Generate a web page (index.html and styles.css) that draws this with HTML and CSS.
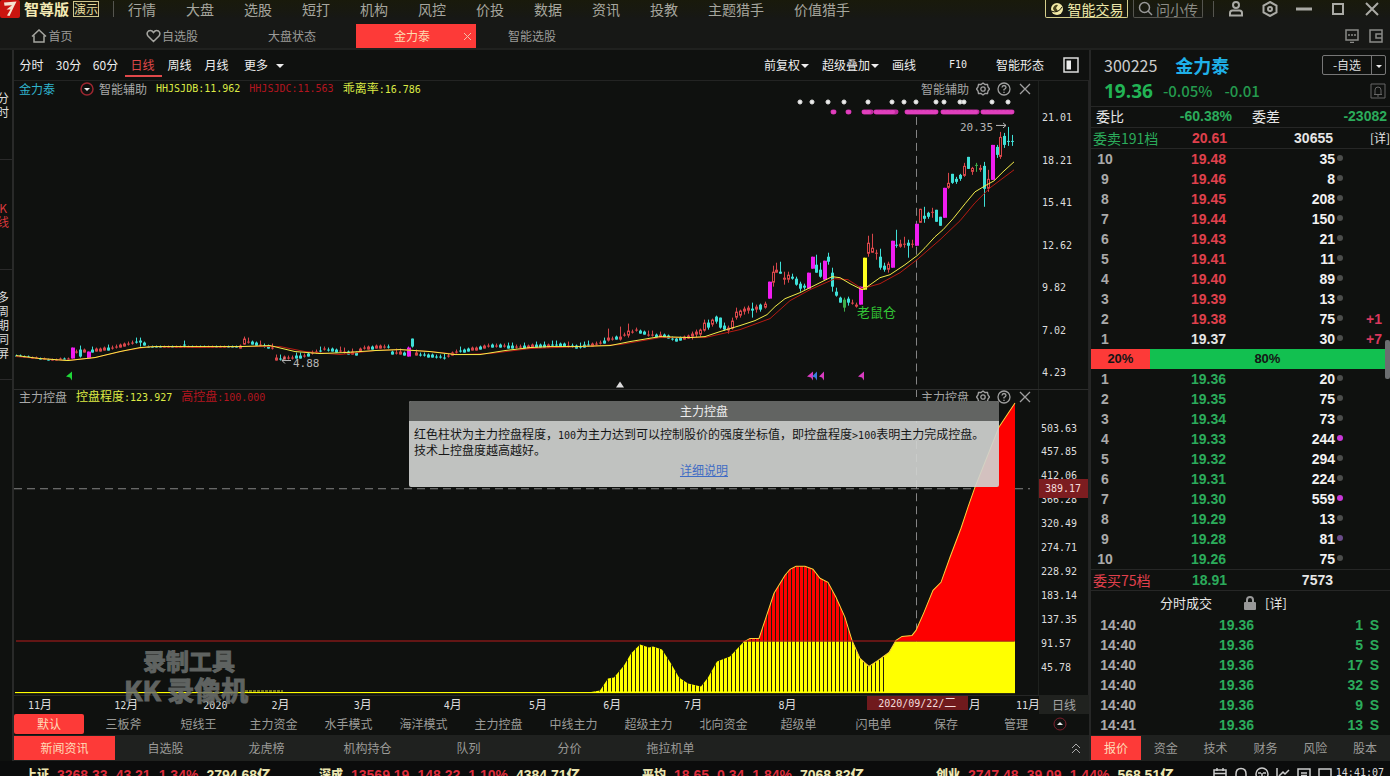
FILE: index.html
```html
<!DOCTYPE html>
<html lang="zh-CN">
<head>
<meta charset="utf-8">
<title>金力泰 300225</title>
<link rel="stylesheet" href="styles.css">
</head>
<body>
<div class="app">
  <header class="topbar">
    <svg class="logo" viewBox="0 0 20 18" aria-hidden="true"><rect width="20" height="18" rx="2" fill="#c9150f"/><path d="M4 2.500L16.500 1.500 14 6.500 9.500 16 7 15.500 10.500 9.500 6.500 9.500 12 5.200 4.500 5.800Z" fill="#f6e3d0"/></svg>
    <strong class="brand">智尊版</strong>
    <span class="badge">演示</span>
    <i class="sep"></i>
    <nav class="mainnav">
      <a href="#">行情</a><a href="#">大盘</a><a href="#">选股</a><a href="#">短打</a><a href="#">机构</a><a href="#">风控</a><a href="#">价投</a><a href="#">数据</a><a href="#">资讯</a><a href="#">投教</a><a href="#">主题猎手</a><a href="#">价值猎手</a>
    </nav>
    <button class="trade"><svg width="14" height="14" viewBox="0 0 14 14"><circle cx="7" cy="7" r="6" fill="#f3eaa5"/><path d="M3 7a4 4 0 0 1 5-4L6 6 8 9Q5 11 3 7Z" fill="#4c461c"/><path d="M1 9Q8 12 12 5" stroke="#17160d" fill="none"/></svg>智能交易</button>
    <label class="search"><svg width="15" height="15" viewBox="0 0 15 15"><circle cx="6.500" cy="6.500" r="5" /><path d="M10 10L14 14"/></svg><input type="text" placeholder="问小传" aria-label="问小传"></label>
    <i class="sep"></i>
    <div class="winbtns">
      <button aria-label="用户"><svg viewBox="0 0 16 16"><circle cx="8" cy="4" r="3"/><path d="M2 14.500V12Q2 9.500 4.500 9.500H11.500Q14 9.500 14 12V14.500Z"/></svg></button>
      <button aria-label="设置"><svg viewBox="0 0 16 16"><path d="M8 1L14.500 4.500V11.500L8 15 1.500 11.500V4.500Z"/><circle cx="8" cy="8" r="2"/></svg></button>
      <button aria-label="最小化"><svg viewBox="0 0 16 16"><path d="M0 8H16" stroke-width="3"/></svg></button>
      <button aria-label="最大化"><svg viewBox="0 0 16 16"><path d="M3 3H13V13H3Z"/></svg></button>
      <button aria-label="关闭"><svg viewBox="0 0 16 16"><path d="M2 2L14 14M14 2L2 14"/></svg></button>
    </div>
  </header>

  <div class="tabbar">
    <a class="tab home" href="#"><svg width="16" height="14" viewBox="0 0 16 14"><path d="M1 7.500L8 1 15 7.500M3 6.500V13H13V6.500"/></svg>首页</a>
    <a class="tab" href="#"><svg width="15" height="14" viewBox="0 0 15 14"><path d="M7.500 12.500L2 7Q0 4 2.500 2 5.500 .500 7.500 3.500 9.500 .500 12.500 2 15 4 13 7Z"/></svg>自选股</a>
    <a class="tab" href="#">大盘状态</a>
    <div class="tab active">金力泰<button class="tabclose" aria-label="关闭标签"><svg width="9" height="9" viewBox="0 0 9 9"><path d="M1 1L8 8M8 1L1 8"/></svg></button></div>
    <a class="tab" href="#">智能选股</a>
    <div class="tabtools">
      <button aria-label="屏幕"><svg width="14" height="14" viewBox="0 0 14 14"><path d="M1 1H13V11H1ZM5 13.500H9M4 5V7M10 5V7M6 6H8"/></svg></button>
      <button aria-label="布局"><svg width="14" height="14" viewBox="0 0 14 14"><path d="M1 1H13V13H1ZM13 5H7V9H13"/></svg></button>
    </div>
  </div>

  <main class="main">
    <nav class="rail">
      <a href="#">分<br>时</a>
      <a href="#" class="on">K<br>线</a>
      <a href="#">多<br>周<br>期<br>同<br>屏</a>
    </nav>

    <section class="charts">
      <div class="periods">
        <a href="#">分时</a><a href="#">30分</a><a href="#">60分</a><a href="#" class="on">日线</a><a href="#">周线</a><a href="#">月线</a>
        <button class="more">更多<i class="caret gapped"></i></button>
        <div class="charttools">
          <button>前复权<i class="caret"></i></button>
          <button>超级叠加<i class="caret"></i></button>
          <button class="draw">画线</button>
          <button class="mono f10">F10</button>
          <button class="shape">智能形态</button>
          <button aria-label="侧栏"><svg width="16" height="16" viewBox="0 0 16 16"><path d="M1 1H15V15H1Z" fill="none" stroke="#ddd" stroke-width="1.500"/><path d="M3.500 3.500H8V12.500H3.500Z" fill="#eee"/></svg></button>
        </div>
      </div>

      <div class="panel price">
        <div class="stack">
          <svg class="plot" id="kline" viewBox="14 81 1024 308" preserveAspectRatio="none">
            <g class="cross"><path d="M916.500 117V389"/></g>
            <g id="candles"></g>
            <polyline class="ma slow" points="16,357 40,359 68,361 95,358 125,351 150,347 200,348 240,347 280,347 305,352 340,355 375,351 400,350 430,352 460,355 490,354 530,349 580,347 620,345 660,338 705,338 740,330 770,319 790,301 810,290 835,279 848,280 862,289 880,284 900,273 917,260 940,240 960,221 975,203 990,188 1014,170"/>
            <polyline class="ma fast" points="16,356 40,359 68,361 95,358 120,352 140,348 155,347 200,347 240,347 270,346 295,352 320,354 345,353 375,351 400,350 430,352 455,355 480,355 505,351 530,348 550,347 575,347 610,346 630,342 660,337 690,338 705,337 720,332 740,326 755,321 767,315 775,307 785,299 800,293 810,288 832,277 840,278 850,284 862,290 866,288 880,278 890,275 905,265 917,256 925,248 935,237 943,230 953,219 965,204 975,192 985,186 994,181 1003,172 1014,162"/>
            <g id="stars"></g>
            <g class="beads"><path d="M833 112h1M848 112h1M864 112H871M876 112H896M907 112H936M943 112H977M983 112H1012"/><path class="lit" d="M833 112h1M848 112h1M864 112H871M876 112H896M907 112H936M943 112H977M983 112H1012"/></g>
            <path d="M66 377L72 372V381L70 378Z" fill="#1fd838"/>
            <g fill="#d83cc0"><path d="M807 377L813 372V381L811 378Z"/><path d="M819 377L824 372V381L822 378Z"/><path d="M858 377L864 372V381L862 378Z"/></g>
            <path d="M812 377L817 372V381L815 378Z" fill="#3b7de0"/>
            <path d="M616 388L620 382 624 388Z" fill="#ddd"/>
            <g class="arrow"><path d="M291 361H282M285 358L282 361 285 364M996 125.500H1006M1003 123L1006 125.500 1003 128"/></g>
            <text class="note" x="293" y="367">4.88</text>
            <text class="note" x="960" y="131">20.35</text>
            <text class="rat" x="857" y="317">老鼠仓</text>
          </svg>
          <div class="phead">
            <span class="stock">金力泰</span>
            <svg width="14" height="14" viewBox="0 0 14 14"><circle cx="7" cy="7" r="6" fill="none" stroke="#9c2630" stroke-width="1.500"/><path d="M4 6H10L7 9Z" fill="#eee"/></svg>
            <span class="gray">智能辅助</span>
            <span class="yel mono">HHJSJDB:11.962</span>
            <span class="red mono">HHJSJDC:11.563</span>
            <span class="yel">乖离率<span class="mono">:16.786</span></span>
            <div class="ptools"><span>智能辅助</span>
              <button aria-label="设置"><svg viewBox="0 0 14 14"><path d="M7 1L9 2.500 11.500 2.500 12 5 13.500 7 12 9 11.500 11.500 9 11.500 7 13 5 11.500 2.500 11.500 2 9 .500 7 2 5 2.500 2.500 5 2.500Z"/><circle cx="7" cy="7" r="2.200"/></svg></button>
              <button aria-label="帮助"><svg viewBox="0 0 14 14"><circle cx="7" cy="7" r="6"/><path d="M5 5.500Q5.200 3.500 7 3.500 9 3.600 9 5.300 8.800 6.500 7 7.500V8.500M7 9.700V11"/></svg></button>
              <button aria-label="关闭"><svg viewBox="0 0 14 14"><path d="M2 2L12 12M12 2L2 12"/></svg></button>
            </div>
          </div>
        </div>
        <div class="axis"><span>21.01</span><span>18.21</span><span>15.41</span><span>12.62</span><span>9.82</span><span>7.02</span><span>4.23</span></div>
      </div>

      <div class="panel control">
        <div class="stack">
          <svg class="plot" viewBox="14 390 1024 305" preserveAspectRatio="none">
            <defs>
              <clipPath id="area"><path d="M15 693V691.500H591L600 690 608 678 614 677 624 665 631 653 640 644 649 647 653 646 662 649 671 663 679 677 688 683 701 686 708 677 717 661 730 656 743 642 750 638 759 638 765 620 774 593 785 575 790 569 796 566 805 566 813 569 820 578 828 582 836 597 845 617 852 640 860 658 869 666 878 660 889 652 896 640 902 636 912 635 916 630 924 612 933 590 941 582 950 557 961 528 968 507 975 487 999 427 1015 403V693Z"/></clipPath>
              <pattern id="slits" width="4" height="4" patternUnits="userSpaceOnUse"><rect x="3" width="1" height="4" fill="#241f08"/></pattern>
            </defs>
            <g class="cross"><path d="M916.500 389V692M14 488.500H1030"/></g>
            <g clip-path="url(#area)">
              <rect x="14" y="389" width="1002" height="252" fill="#fe0000"/>
              <rect x="14" y="641" width="1002" height="52" fill="#ffff00"/>
              <rect x="592" y="389" width="292" height="302" fill="url(#slits)"/>
            </g>
            <polyline class="edge" points="743,642 750,638 759,638 765,620 774,593 785,575 790,569 796,566 805,566 813,569 820,578 828,582 836,597 845,617 852,640 860,658 869,666 878,660 889,652 896,640 902,636 912,635 916,630 924,612 933,590 941,582 950,557 961,528 968,507 975,487 999,427 1015,403"/>
            <path d="M16 640.500H1014" stroke="#b81c1c"/>
            <path d="M245 690.500H283" stroke="#d9d930" stroke-dasharray="3 1"/>
          </svg>
          <div class="phead">
            <span class="gray">主力控盘</span>
            <span class="yel">控盘程度<span class="mono">:123.927</span></span>
            <span class="red">高控盘<span class="mono">:100.000</span></span>
            <div class="ptools"><span>主力控盘</span>
              <button aria-label="设置"><svg viewBox="0 0 14 14"><path d="M7 1L9 2.500 11.500 2.500 12 5 13.500 7 12 9 11.500 11.500 9 11.500 7 13 5 11.500 2.500 11.500 2 9 .500 7 2 5 2.500 2.500 5 2.500Z"/><circle cx="7" cy="7" r="2.200"/></svg></button>
              <button aria-label="帮助"><svg viewBox="0 0 14 14"><circle cx="7" cy="7" r="6"/><path d="M5 5.500Q5.200 3.500 7 3.500 9 3.600 9 5.300 8.800 6.500 7 7.500V8.500M7 9.700V11"/></svg></button>
              <button aria-label="关闭"><svg viewBox="0 0 14 14"><path d="M2 2L12 12M12 2L2 12"/></svg></button>
            </div>
          </div>
          <div class="popup" role="dialog" aria-label="主力控盘">
            <h2>主力控盘</h2>
            <p>红色柱状为主力控盘程度，<span class="mono">100</span>为主力达到可以控制股价的强度坐标值，即控盘程度<span class="mono">&gt;100</span>表明主力完成控盘。<br>技术上控盘度越高越好。</p>
            <a href="#">详细说明</a>
          </div>
          <div class="watermark"><span class="w1">录制工具</span><span class="w2">KK 录像机</span></div>
        </div>
        <div class="axis dense"><span>503.63</span><span>457.85</span><span>412.06</span><span>366.28</span><span>320.49</span><span>274.71</span><span>228.92</span><span>183.14</span><span>137.35</span><span>91.57</span><span>45.78</span><b class="tag">389.17</b></div>
      </div>

      <div class="dates">
        <div class="months">
          <span><i>11</i>月</span><span><i>12</i>月</span><span><i>2020</i></span><span><i>2</i>月</span><span><i>3</i>月</span><span><i>4</i>月</span><span><i>5</i>月</span><span><i>6</i>月</span><span><i>7</i>月</span><span><i>8</i>月</span><span class="tagged"><b class="datetag">2020/09/22/<em>二</em></b></span><span>月</span><span><i>11</i>月</span>
        </div>
        <button class="unit">日线</button>
      </div>

      <div class="modes">
        <button class="on">默认</button><button>三板斧</button><button>短线王</button><button>主力资金</button><button>水手模式</button><button>海洋模式</button><button>主力控盘</button><button>中线主力</button><button>超级主力</button><button>北向资金</button><button>超级单</button><button>闪电单</button><button class="n">保存</button><button class="n">管理</button>
        <button class="expand" aria-label="展开"><svg width="14" height="14" viewBox="0 0 14 14"><circle cx="7" cy="7" r="6" fill="none" stroke="#7d1f2c"/><path d="M4 8H10L7 5Z" fill="#eee"/></svg></button>
      </div>
      <div class="news">
        <button class="on">新闻资讯</button><button>自选股</button><button>龙虎榜</button><button>机构持仓</button><button>队列</button><button>分价</button><button>拖拉机单</button>
        <button class="fold" aria-label="收起"><svg width="10" height="12" viewBox="0 0 10 12"><path d="M1 6L5 2 9 6M1 11L5 7 9 11" fill="none" stroke="#aaa"/></svg></button>
      </div>
    </section>

    <aside class="quote">
      <div class="qhead">
        <div class="qline"><span class="code">300225</span><strong class="name">金力泰</strong>
          <span class="fav"><button>-自选</button><button aria-label="更多自选"><i class="caret tiny"></i></button></span></div>
        <div class="qline"><strong class="last">19.36</strong><span class="chg">-0.05%</span><span class="chg">-0.01</span>
          <button class="bell" aria-label="提醒"><svg width="16" height="16" viewBox="0 0 16 16"><path d="M1 1H15V15H1ZM4 11.500H12M5 11V7Q5 4 8 4 11 4 11 7V11M7 13H9"/></svg></button></div>
      </div>
      <div class="ratio"><span>委比</span><b class="dn">-60.38%</b><span>委差</span><b class="dn">-23082</b></div>
      <table class="book sum"><tr><th class="dn">委卖191档</th><td class="up">20.61</td><td>30655</td><td><a href="#">[详]</a></td></tr></table>
      <table class="book asks"><tbody id="asks"></tbody></table>
      <div class="force"><b class="sell">20%</b><b class="buy">80%</b></div>
      <table class="book bids"><tbody id="bids"></tbody></table>
      <table class="book sum last-sum"><tr><th class="up">委买75档</th><td class="dn">18.91</td><td>7573</td><td></td></tr></table>
      <div class="tickhead"><span>分时成交</span><svg width="12" height="14" viewBox="0 0 12 14"><path d="M3 6V4Q3 1 6 1 9 1 9 4V6" fill="none" stroke="#999" stroke-width="2"/><rect y="6" width="12" height="8" rx="1" fill="#999"/></svg><a href="#">[详]</a></div>
      <table class="trades"><tbody id="trades"></tbody></table>
      <nav class="qtabs"><button class="on">报价</button><button>资金</button><button>技术</button><button>财务</button><button>风险</button><button>股本</button></nav>
      <i class="thumb"></i>
    </aside>
  </main>

  <footer class="ticker">
    <div class="idx"><b>上证</b><em>3268.33</em><em>43.21</em><em>1.34%</em><b>2794.68亿</b></div>
    <div class="idx wide"><b>深成</b><em>13569.19</em><em>148.22</em><em>1.10%</em><b>4384.71亿</b></div>
    <div class="idx"><b>平均</b><em>18.65</em><em>0.34</em><em>1.84%</em><b>7068.82亿</b></div>
    <div class="idx tail"><b>创业</b><em>2747.48</em><em>39.09</em><em>1.44%</em><b>568.51亿</b></div>
    <div class="status">
      <svg viewBox="0 0 14 14"><path d="M1 3H13V13H1ZM1 6.500H13M4 1V4M10 1V4"/></svg>
      <svg viewBox="0 0 14 14"><path d="M2 11V7Q2 1.500 7 1.500 12 1.500 12 7V11ZM5 13H9"/></svg>
      <svg viewBox="0 0 14 14"><circle cx="7" cy="7" r="6"/><path d="M3 6H6M8 6H11M7 6V10M4 9Q7 12 10 9"/></svg>
      <svg viewBox="0 0 14 14"><path d="M1 1V13H13M3 9L7 5 9 7 13 3"/></svg>
      <svg viewBox="0 0 14 14"><path d="M1 2H13V12H1ZM4 6H10M4 8.500H10"/></svg>
      <svg viewBox="0 0 14 14"><path d="M1 2H13V12H1Z"/></svg>
      <time class="mono">14:41:07</time>
    </div>
  </footer>
</div>
<script src="app.js"></script>
</body>
</html>
```

FILE: styles.css
```css
* { box-sizing: border-box; }
body { margin: 0; background: #0f110f; color: #e6e6e6; font: 12px/14px "Noto Sans CJK SC", sans-serif; }
button { background: none; border: 0; padding: 0; margin: 0; color: inherit; font: inherit; white-space: nowrap; }
a { color: inherit; text-decoration: none; white-space: nowrap; }
i, em { font-style: normal; }
svg { display: block; flex: none; }
.mono, .axis, .note, .months i { font-family: "DejaVu Sans Mono", monospace; font-size: 10px; }
.app { display: flex; flex-direction: column; height: 100vh; overflow: hidden; }

/* title bar */
.topbar { display: flex; align-items: center; height: 18px; flex: none; background: linear-gradient(#191a0b, #171815); color: #a6a69e; font-size: 14px; line-height: 16px; }
.logo { width: 20px; height: 18px; }
.brand { margin-left: 4px; font-size: 15px; color: #f3e9b4; }
.badge { margin-left: 4px; width: 26px; height: 16px; border: 1px solid #cfc68c; color: #e3d99c; font-size: 12px; line-height: 14px; text-align: center; }
.sep { width: 1px; height: 16px; background: #55554f; margin: 0 14px; }
.mainnav { display: flex; gap: 30px; flex: 1; }
.trade, .search { display: flex; align-items: center; height: 18px; border: 1px solid #d6cf8b; border-top: 0; border-radius: 0 0 2px 2px; }
.trade { width: 83px; justify-content: center; gap: 4px; color: #efe9a9; }
.search { width: 70px; margin-left: 5px; padding-left: 4px; gap: 3px; border-color: #55554f; margin-right: -4px; }
.search svg { fill: none; stroke: #999; stroke-width: 1.500; }
.search input { width: 44px; height: 16px; padding: 0; border: 0; background: none; font: inherit; outline: 0; }
.search input::placeholder { color: #8b8b85; opacity: 1; }
.winbtns { display: flex; gap: 18px; padding-right: 10px; }
.winbtns svg { width: 16px; height: 16px; fill: none; stroke: #aaaaa5; stroke-width: 2; }

/* page tabs */
.tabbar { display: flex; height: 32px; padding-top: 6px; flex: none; background: #171816; border-bottom: 2px solid #20211f; color: #9b9b98; }
.tab { position: relative; display: flex; align-items: center; justify-content: center; gap: 1px; width: 120px; height: 24px; padding-right: 8px; }
.tab.home { width: 116px; padding-right: 12px; }
.tab svg { fill: none; stroke: #a5a5a0; stroke-width: 1.500; }
.tab.active { background: #fd3a38; color: #ffd9b0; }
.tabclose { position: absolute; right: 4px; top: 8px; }
.tab .tabclose svg { stroke: #f0c0a8; stroke-width: 1; }
.tabtools { display: flex; gap: 10px; margin-left: auto; padding-right: 7px; }
.tabtools svg { fill: none; stroke: #8a8a88; stroke-width: 1.500; }

.main { display: grid; grid-template-columns: 14px minmax(0, 1fr) 301px; flex: 1; min-height: 0; }
.rail { border-right: 2px solid #292a29; overflow: hidden; color: #ddd; }
.rail a { display: flex; align-items: center; height: 110px; margin-left: -3px; border-bottom: 1px solid #2a2a2a; text-align: center; }
.rail .on { color: #d8383c; }

/* chart column */
.charts { display: flex; flex-direction: column; min-width: 0; min-height: 0; }
.periods { display: flex; align-items: center; height: 31px; flex: none; border-bottom: 1px solid #232423; color: #eee; }
.periods > a { width: 37px; height: 24px; padding-right: 2px; text-align: center; line-height: 24px; }
.periods .on { color: #e0484a; border-bottom: 2px solid #e0484a; }
.more { margin-left: 8px; }
.caret { display: inline-block; border: 4px solid transparent; border-top-color: #eee; border-bottom: 0; margin: 0 0 2px 1px; }
.caret.gapped { margin-left: 8px; }
.caret.tiny { border-width: 3px; border-bottom: 0; margin: 0 0 2px; }
.charttools { display: flex; align-items: center; gap: 13px; margin-left: auto; padding-right: 10px; }
.charttools .f10 { margin-left: 20px; }
.charttools .shape { margin: 0 6px 0 16px; }
.panel { display: grid; grid-template-columns: minmax(0, 1fr) 49px; min-height: 0; border-right: 1px solid #242424; }
.price { flex: 308 1 0; }
.control { flex: 306 1 0; border-top: 1px solid #2c2d2c; }
.stack { position: relative; display: grid; grid-template: minmax(0, 1fr) / minmax(0, 1fr); border-right: 1px solid #1e211e; min-height: 0; }
.plot { grid-area: 1 / 1; width: 100%; height: 100%; min-height: 0; }
.phead { grid-area: 1 / 1; align-self: start; display: flex; align-items: center; gap: 9px; height: 16px; padding: 0 6px 0 5px; white-space: nowrap; }
.control .phead { height: 14px; }
.price .phead svg { margin-right: -4px; }
.stock { color: #2fb3cc; margin-right: 16px; }
.gray { color: #a9a9a9; }
.yel { color: #dcea45; }
.red { color: #b3151f; }
.ptools { display: flex; align-items: center; gap: 7px; margin-left: auto; color: #a5a5a5; }
.phead .ptools svg { width: 14px; height: 14px; margin: 0; fill: none; stroke: #a0a0a0; stroke-width: 1.300; }
.axis { display: flex; flex-direction: column; justify-content: space-between; padding: 30px 0 8px 3px; color: #ddd; }
.axis span { display: block; }
.dense { position: relative; padding: 32px 0 20px 2px; }
.tag { position: absolute; left: 0; right: 0; top: 89px; height: 19px; background: #7c1d20; color: #f5dcdc; font-weight: 400; line-height: 19px; padding-left: 6px; }
.cross path { stroke: #858585; stroke-dasharray: 8 5; fill: none; }
.ma { fill: none; stroke-width: 1; }
.fast { stroke: #f5ee4a; }
.slow { stroke: #b81a12; }
.edge { fill: none; stroke: #ffd23a; stroke-width: 1; }
.beads path { fill: none; stroke: #c02aa0; stroke-width: 5; stroke-linecap: round; }
.beads .lit { stroke: #e040bd; stroke-width: 4; stroke-dasharray: 1 3; }
.arrow { fill: none; stroke: #bbb; }
.note { fill: #b5b5b5; font-size: 11px; }
.rat { fill: #33c636; font-size: 13px; }

.popup { position: absolute; left: 395px; right: 39px; top: 11px; background: rgba(207, 209, 207, .92); color: #151515; text-align: center; padding-bottom: 10px; border-radius: 2px; overflow: hidden; }
.popup h2 { margin: 0; height: 20px; background: #626462; color: #eee; font: inherit; line-height: 20px; }
.popup p { margin: 5px; line-height: 16px; text-align: left; }
.popup .mono { line-height: 10px; }
.popup a { color: #3f6cc4; text-decoration: underline; }
.watermark { position: absolute; left: 110px; bottom: -10px; display: flex; flex-direction: column; color: #6e7270; -webkit-text-stroke: 1px #6e7270; opacity: .85; font-weight: 700; white-space: nowrap; pointer-events: none; }
.w1 { font-size: 23px; line-height: 30px; padding-left: 19px; }
.w2 { font-size: 27px; line-height: 30px; }

.dates { display: grid; grid-template-columns: minmax(0, 1fr) 50px; height: 18px; flex: none; line-height: 16px; color: #ddd; }
.months { display: grid; grid-template-columns: 86fr 89fr 68fr 82fr 90fr 85fr 74fr 81fr 94fr 88fr 102fr 47fr 23fr; padding-left: 14px; white-space: nowrap; border-top: 1px solid #262726; }
.months span { min-width: 0; }
.tagged { display: flex; }
.datetag { flex: 1; margin-right: 1px; height: 14px; background: #701a1d; color: #f5dcdc; font: 10px/14px "DejaVu Sans Mono", "Noto Sans CJK SC", monospace; text-align: center; }
.datetag em { font-size: 12px; }
.unit { background: #20221f; color: #a5a5a5; }

.modes, .news { display: flex; align-items: center; flex: none; color: #9b9b98; }
.modes { height: 22px; }
.modes button { width: 75px; height: 20px; }
.modes .on { width: 70px; margin-right: 2px; border-radius: 2px; }
.modes .n { width: 70px; }
.modes .expand { width: 14px; margin-left: 2px; }
.news { height: 26px; background: #1f211f; }
.news button { width: 101px; height: 24px; }
.news .fold { width: 10px; margin: 0 8px 0 auto; }
.modes .on, .news .on, .qtabs .on { background: #fd3a38; color: #ffdcb8; }
.expand svg { margin: 3px 0; }
.fold svg { margin: 6px 0; }

/* quote column */
.quote { position: relative; display: flex; flex-direction: column; border-left: 2px solid #262726; min-width: 0; overflow: hidden; }
.dn { color: #2bab5b; }
.up { color: #e0404c; }
.qhead { padding: 2px 4px 0 13px; height: 57px; border-bottom: 1px solid #262726; flex: none; }
.qline { display: flex; align-items: center; height: 26px; }
.code { font-size: 16px; color: #ccc; }
.name { margin-left: 18px; font-size: 18px; color: #1fb0e8; }
.fav { display: flex; margin-left: auto; border: 1px solid #777; border-radius: 2px; height: 20px; }
.fav button { width: 48px; font-size: 12px; color: #ddd; }
.fav button + button { width: 14px; border-left: 1px solid #777; }
.last { font: 700 19px/24px "Open Sans", sans-serif; color: #22b455; margin-right: 10px; }
.chg { font-size: 15px; font-weight: 500; color: #249a4e; margin-right: 12px; }
.bell { margin-left: auto; }
.bell svg { fill: none; stroke: #666; }
.ratio { display: grid; grid-template-columns: 50px 86px 53px 1fr; align-items: center; height: 21px; flex: none; padding: 0 3px 2px 5px; border-bottom: 1px solid #262726; font-size: 14px; }
.ratio b { text-align: right; font: 700 14px/18px "Liberation Sans", sans-serif; }
.ratio span + b + span { padding-left: 20px; white-space: nowrap; }
table { border-collapse: collapse; width: 100%; table-layout: fixed; flex: none; }
.book td, .book th, .trades td { height: 20px; padding: 0; text-align: right; font: 700 14px/20px "Liberation Sans", sans-serif; white-space: nowrap; }
.book th { text-align: left; font: 400 14px/20px "Noto Sans CJK SC", sans-serif; padding-left: 2px; }
.sum { border-bottom: 1px solid #262726; }
.sum th { width: 76px; }
.sum td:nth-child(2) { width: 60px; }
.sum td:nth-child(3) { width: 106px; }
.sum td:nth-child(4) { font: 400 12px/20px "Noto Sans CJK SC", sans-serif; }
.last-sum { border-top: 1px solid #262726; }
.book .rank { width: 28px; text-align: center; color: #aaa; }
.book .px { width: 107px; }
.book .vol { width: 109px; color: #f2f2f2; }
.book .dot { width: 10px; }
.dot i { display: block; width: 6px; height: 6px; margin: 6px 0 8px 2px; border-radius: 3px; background: #4c4e4c; }
.dot i.hot { background: #c838d8; }
.dot i.warm { background: #6a4c8a; }
.book .diff { padding-right: 8px; color: #d8385c; }
.force { display: flex; height: 20px; flex: none; color: #151515; text-align: center; font: 700 13px/20px "Liberation Sans", sans-serif; }
.sell { flex: 1; background: #fd3a38; }
.buy { flex: 4; background: #12c050; padding-right: 5px; }
.tickhead { display: flex; align-items: center; height: 24px; flex: none; padding-left: 69px; font-size: 13px; }
.tickhead svg { margin: 0 9px 0 32px; }
.trades td:nth-child(1) { width: 45px; color: #aaa; }
.trades td:nth-child(2) { width: 118px; }
.trades td:nth-child(3) { width: 109px; }
.trades td:nth-child(4) { padding-right: 11px; }
.qtabs { display: flex; margin-top: auto; height: 26px; background: #1f211f; color: #9b9b98; flex: none; }
.qtabs button { flex: 1; height: 24px; margin-top: 1px; }
.thumb { position: absolute; right: 0; top: 290px; width: 5px; height: 39px; border-radius: 2px; background: #6b6e70; }

/* index ticker */
.ticker { display: flex; height: 15px; flex: none; overflow: hidden; padding-left: 25px; background: #0b0c0c; }
.idx { display: flex; flex: none; gap: 8px; width: 294px; font: 700 14px/28px "Liberation Sans", "Noto Sans CJK SC", sans-serif; white-space: nowrap; }
.idx.wide { width: 323px; }
.idx.tail { width: 260px; }
.idx b { color: #ece6b0; }
.idx b:first-child { font-size: 12px; }
.idx em { color: #dc2c3c; }
.status { display: flex; flex: none; gap: 7px; margin-left: auto; padding-right: 6px; }
.status svg { width: 14px; height: 14px; margin-top: 6px; fill: none; stroke: #ccc; stroke-width: 1.500; }
.status time { line-height: 24px; color: #ddd; margin-left: -3px; }
```

FILE: app.js
```js
// Order book and trade rows
const asks = [[10, "19.48", 35], [9, "19.46", 8], [8, "19.45", 208], [7, "19.44", 150], [6, "19.43", 21],
  [5, "19.41", 11], [4, "19.40", 89], [3, "19.39", 13], [2, "19.38", 75, "+1"], [1, "19.37", 30, "+7"]];
const bids = [[1, "19.36", 20], [2, "19.35", 75], [3, "19.34", 73], [4, "19.33", 244], [5, "19.32", 294],
  [6, "19.31", 224], [7, "19.30", 559], [8, "19.29", 13], [9, "19.28", 81], [10, "19.26", 75]];
const hot = { 244: "hot", 559: "hot", 81: "warm" };
const row = cls => ([n, p, v, d]) =>
  `<tr><td class="rank">${n}</td><td class="px ${p === "19.37" ? "" : cls}">${p}</td><td class="vol">${v}</td>` +
  `<td class="dot"><i class="${hot[v] || ""}"></i></td><td class="diff">${d || ""}</td></tr>`;
document.getElementById("asks").innerHTML = asks.map(row("up")).join("");
document.getElementById("bids").innerHTML = bids.map(row("dn")).join("");
document.getElementById("trades").innerHTML =
  [["14:40", 1], ["14:40", 5], ["14:40", 17], ["14:40", 32], ["14:40", 9], ["14:41", 13]]
    .map(([t, v]) => `<tr><td>${t}</td><td class="dn">19.36</td><td class="dn">${v}</td><td class="dn">S</td></tr>`).join("");

// Candles: [x, high, low, body top, body bottom, kind]
const CY = "#3fe0d8", RD = "#d8464a", MG = "#f01df0";
const out = [];
function candle(x, hi, lo, t, b, k) {
  const col = { c: CY, r: RD, m: MG, y: "#ffff20", g: "#3fae4a" }[k];
  out.push(`<path d="M${x + .5} ${hi}V${lo}" stroke="${col}"/>`);
  const h = Math.max(1, b - t);
  if (k === "r" && h > 2) out.push(`<rect x="${x - 1 + .5}" y="${t + .5}" width="2" height="${h - 1}" fill="#0f110f" stroke="${col}"/>`);
  else {
    const w = k === "m" || k === "y" ? 4 : 3;
    out.push(`<rect x="${x - 1}" y="${t}" width="${w}" height="${h}" fill="${col}"/>`);
  }
}
// quiet early stretch follows a coarse level line
const level = [[16, 356], [50, 360], [68, 359], [76, 352], [100, 350], [112, 348], [140, 341], [148, 347], [240, 347],
  [244, 341], [272, 348], [276, 359], [300, 357], [316, 352], [324, 349], [340, 351], [356, 354], [362, 348], [388, 347],
  [392, 353], [416, 354], [444, 358], [456, 352], [485, 347], [490, 346], [520, 347], [560, 345], [580, 347], [600, 343],
  [608, 340], [628, 334], [636, 330], [648, 335], [664, 336], [676, 340], [684, 338], [700, 333], [706, 327], [716, 320],
  [722, 325], [728, 330], [736, 316], [744, 311], [760, 308]];
const at = x => {
  const i = level.findIndex(p => p[0] >= x);
  if (i <= 0) return level[0][1];
  const [x0, y0] = level[i - 1], [x1, y1] = level[i];
  return y0 + (y1 - y0) * (x - x0) / (x1 - x0);
};
const special = { 72: [348, 359, 348, 359, "m"], 80: [346, 358, 350, 357, "c"], 88: [352, 359, 352, 359, "m"],
  140: [338, 347, 341, 343, "c"], 184: [341, 348, 345, 346, "c"], 244: [337, 345, 339, 345, "r"],
  408: [347, 357, 348, 357, "m"], 412: [339, 348, 339, 347, "c"], 608: [329, 342, 338, 341, "r"],
  620: [327, 341, 337, 340, "r"], 628: [324, 338, 331, 336, "r"], 704: [320, 332, 323, 331, "r"],
  720: [318, 329, 318, 328, "c"], 724: [323, 331, 326, 330, "c"], 732: [318, 330, 321, 329, "r"],
  736: [308, 320, 312, 318, "r"], 752: [303, 318, 309, 311, "c"] };
for (let x = 16, i = 0; x <= 760; x += 4, i++) {
  if (special[x]) { candle(x, ...special[x]); continue; }
  const n = (i * 37 + (i * i) % 11) % 7, y = Math.round(at(x));
  const falling = at(x + 4) > at(x - 4) + .3;
  const k = falling ? (n < 5 ? "c" : "r") : (n < 4 ? "r" : "c");
  const flat = x < 70 || (x > 144 && x < 240), grow = x > 690 ? 2 : 0;
  const body = flat ? 0 : n % 3;
  candle(x, y - (flat ? 1 : 2) - (n > 4 && !flat ? 2 : 0) - grow, y + (flat ? 1 : 2) + grow, y - (body ? 1 : 0) - grow, y + (body ? 2 : 1), k);
}
[[765,302,309,304,308,"r"],[769,282,299,282,299,"m"],[773,266,287,272,283,"r"],[776,263,273,270,273,"r"],[780,262,274,272,274,"c"],
[784,272,285,278,280,"r"],[788,272,283,275,280,"r"],[792,274,280,277,279,"c"],[796,277,286,279,285,"c"],[800,282,292,284,289,"c"],
[804,284,290,286,288,"c"],[808,273,289,273,289,"m"],[812,257,269,257,269,"m"],[816,255,273,265,273,"c"],[820,263,278,270,277,"c"],
[824,261,280,261,280,"m"],[828,253,265,257,262,"c"],[832,268,292,273,287,"c"],[836,288,297,292,296,"c"],[840,297,303,298,303,"c"],
[844,298,312,300,308,"g"],[848,297,306,299,303,"c"],[852,300,305,303,304,"r"],[856,303,308,305,307,"r"],[860,287,305,287,305,"m"],
[864,258,290,258,290,"y"],[868,236,257,243,254,"r"],[872,234,253,248,253,"r"],[876,250,260,253,254,"r"],[880,249,270,257,268,"c"],
[884,263,272,266,270,"c"],[888,262,273,264,270,"r"],[892,241,268,241,268,"m"],[896,230,248,245,246,"c"],[900,240,248,244,247,"r"],
[904,237,248,244,245,"r"],[908,240,258,243,246,"c"],[912,240,248,244,245,"r"],[916,224,246,224,246,"m"],[920,209,223,209,223,"r"],
[924,207,223,216,219,"c"],[928,212,219,213,217,"c"],[932,208,218,212,213,"r"],[936,210,222,210,222,"c"],[940,217,226,217,226,"c"],
[944,188,218,188,218,"m"],[948,173,189,183,188,"r"],[952,174,184,174,183,"c"],[956,177,184,179,182,"c"],[960,174,181,175,179,"c"],
[964,163,177,166,176,"r"],[968,157,169,157,169,"c"],[972,167,175,168,172,"r"],[976,163,172,165,166,"g"],[980,165,172,168,170,"r"],
[984,162,207,166,189,"c"],[988,170,192,179,189,"r"],[992,145,180,145,180,"m"],[997,145,158,147,155,"c"],[1000,132,159,137,157,"r"],
[1004,133,148,136,145,"c"],[1008,127,146,141,142,"c"],[1012,135,146,141,142,"c"]].forEach(c => candle(...c));
document.getElementById("candles").innerHTML = out.join("");

// Signal marks above the candles
document.getElementById("stars").innerHTML = [800, 812, 828, 844, 868, 892, 904, 916, 936, 944, 960, 964, 992, 1008]
  .map(x => `<path d="M${x - 3} 102h6M${x} 99v6M${x - 2} 100l4 4M${x + 2} 100l-4 4" stroke="#aaa"/><circle cx="${x}" cy="102" r="2" fill="#eee"/>`).join("");
```
